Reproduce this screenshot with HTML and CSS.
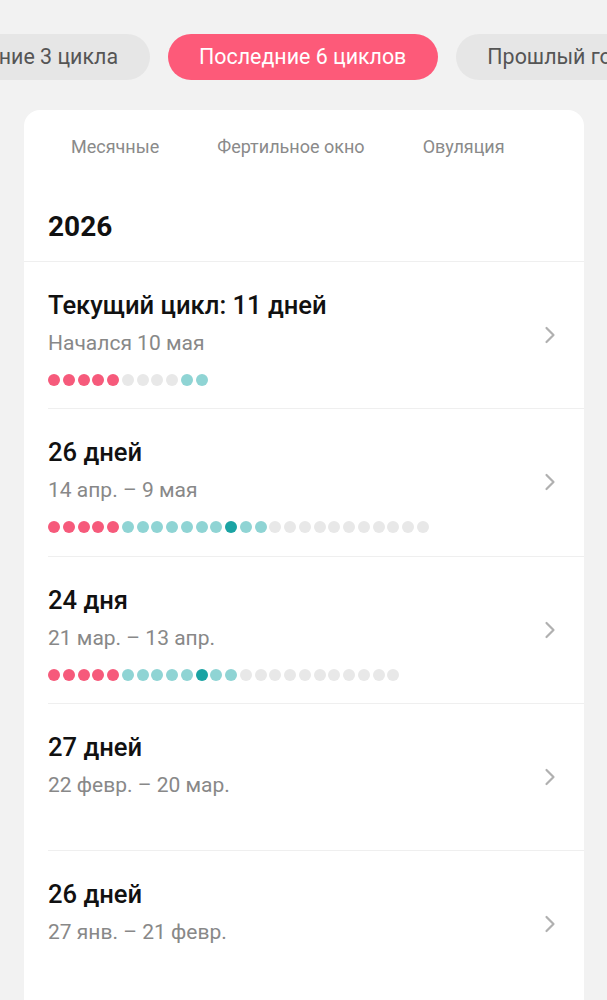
FILE: index.html
```html
<!DOCTYPE html>
<html lang="ru">
<head>
    <meta charset="UTF-8">
    <meta name="viewport" content="width=device-width, initial-scale=1.0">
    <title>История циклов</title>
    <link rel="stylesheet" href="styles.css">
</head>
<body>
    <div class="chips">
        <div class="chips-track">
            <div class="chip">Последние 3 цикла</div>
            <div class="chip active">Последние 6 циклов</div>
            <div class="chip">Прошлый год</div>
        </div>
    </div>

    <div class="card">
        <div class="legend">
            <span>Месячные</span>
            <span>Фертильное окно</span>
            <span>Овуляция</span>
        </div>
        <div class="year">2026</div>

        <div class="cycle">
            <div class="cycle-info">
                <div class="cycle-title">Текущий цикл: 11 дней</div>
                <div class="cycle-dates">Начался 10 мая</div>
                <div class="dots" data-days="pppppeeeeff"></div>
            </div>
            <svg class="chevron" width="12" height="18" viewBox="0 0 12 18"><path d="M2.5 2 L9.5 9 L2.5 16" fill="none" stroke="#b0b0b0" stroke-width="2.2" stroke-linecap="round" stroke-linejoin="round"/></svg>
        </div>

        <div class="cycle">
            <div class="cycle-info">
                <div class="cycle-title">26 дней</div>
                <div class="cycle-dates">14 апр. – 9 мая</div>
                <div class="dots" data-days="pppppfffffffoffeeeeeeeeeee"></div>
            </div>
            <svg class="chevron" width="12" height="18" viewBox="0 0 12 18"><path d="M2.5 2 L9.5 9 L2.5 16" fill="none" stroke="#b0b0b0" stroke-width="2.2" stroke-linecap="round" stroke-linejoin="round"/></svg>
        </div>

        <div class="cycle">
            <div class="cycle-info">
                <div class="cycle-title">24 дня</div>
                <div class="cycle-dates">21 мар. – 13 апр.</div>
                <div class="dots" data-days="pppppfffffoffeeeeeeeeeee"></div>
            </div>
            <svg class="chevron" width="12" height="18" viewBox="0 0 12 18"><path d="M2.5 2 L9.5 9 L2.5 16" fill="none" stroke="#b0b0b0" stroke-width="2.2" stroke-linecap="round" stroke-linejoin="round"/></svg>
        </div>

        <div class="cycle">
            <div class="cycle-info">
                <div class="cycle-title">27 дней</div>
                <div class="cycle-dates">22 февр. – 20 мар.</div>
            </div>
            <svg class="chevron" width="12" height="18" viewBox="0 0 12 18"><path d="M2.5 2 L9.5 9 L2.5 16" fill="none" stroke="#b0b0b0" stroke-width="2.2" stroke-linecap="round" stroke-linejoin="round"/></svg>
        </div>

        <div class="cycle">
            <div class="cycle-info">
                <div class="cycle-title">26 дней</div>
                <div class="cycle-dates">27 янв. – 21 февр.</div>
            </div>
            <svg class="chevron" width="12" height="18" viewBox="0 0 12 18"><path d="M2.5 2 L9.5 9 L2.5 16" fill="none" stroke="#b0b0b0" stroke-width="2.2" stroke-linecap="round" stroke-linejoin="round"/></svg>
        </div>
    </div>

    <script>
        // p - месячные, f - фертильное окно, o - овуляция, e - обычный день
        var kinds = { p: "period", f: "fertile", o: "ovulation", e: "empty" };
        document.querySelectorAll(".dots").forEach(function (row) {
            row.dataset.days.split("").forEach(function (d) {
                var dot = document.createElement("span");
                dot.className = "dot " + kinds[d];
                row.appendChild(dot);
            });
        });
    </script>
</body>
</html>
```

FILE: styles.css
```css
body {
    margin: 0;
    background: #f2f2f2;
    font-family: Roboto, "Noto Sans", sans-serif;
    color: #111;
    overflow: hidden;
}
.chips {
    overflow: hidden;
    padding-top: 34px;
}
.chips-track {
    display: flex;
    gap: 18px;
    margin-left: -108px;
    white-space: nowrap;
}
.chip {
    flex: none;
    height: 46px;
    line-height: 46px;
    padding: 0 31.5px;
    border-radius: 23px;
    background: #e6e6e6;
    color: #555;
    font-size: 21.4px;
}
.chip.active {
    background: #fd5a79;
    color: #fff;
}
.card {
    margin: 30px 23px 0 24px;
    background: #fff;
    border-radius: 16px 16px 0 0;
    min-height: 900px;
}
.legend {
    display: flex;
    gap: 58px;
    padding: 25px 0 0 47px;
    font-size: 18px;
    line-height: 24px;
    color: #8a8a8a;
}
.year {
    padding: 51px 24px 17px;
    font-size: 28px;
    line-height: 34px;
    font-weight: 700;
    border-bottom: 1px solid #efefef;
}
.cycle {
    display: flex;
    align-items: center;
    height: 146.3px;
    margin-left: 24px;
    padding-right: 28px;
    border-bottom: 1px solid #efefef;
}
.cycle:last-child {
    border-bottom: none;
}
.cycle-info {
    flex: 1;
    align-self: flex-start;
    padding-top: 28px;
}
.cycle-title {
    font-size: 25.6px;
    line-height: 30px;
    font-weight: 500;
}
.cycle-dates {
    margin-top: 9px;
    font-size: 21px;
    line-height: 28px;
    color: #888;
}
.dots {
    display: flex;
    gap: 2.75px;
    margin-top: 17px;
}
.dot {
    width: 12px;
    height: 12px;
    border-radius: 50%;
}
.dot.period {
    background: #f65a7b;
}
.dot.fertile {
    background: #8fd4d4;
}
.dot.ovulation {
    background: #1aa3a3;
}
.dot.empty {
    background: #e8e8e8;
}
.chevron {
    flex: none;
}
```
